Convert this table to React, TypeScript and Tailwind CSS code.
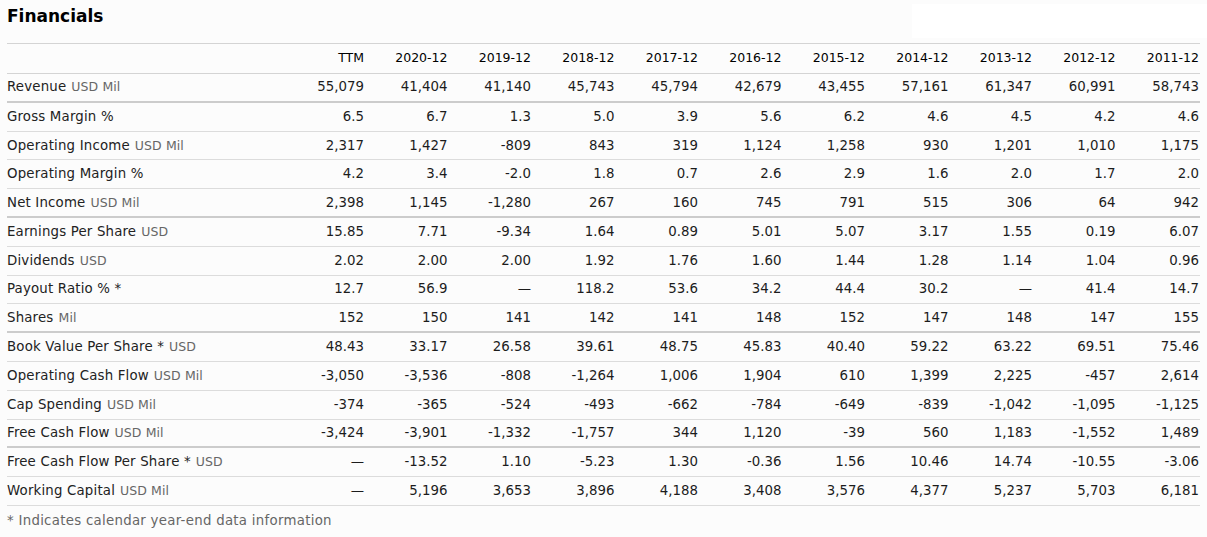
type Row = {
    label: string;
    unit?: string;
    star?: boolean;
    values: string[];
    thick?: boolean;
};

const years = ["TTM", "2020-12", "2019-12", "2018-12", "2017-12", "2016-12", "2015-12", "2014-12", "2013-12", "2012-12", "2011-12"];

const rows: Row[] = [
    { label: "Revenue", unit: "USD Mil", thick: true, values: ["55,079", "41,404", "41,140", "45,743", "45,794", "42,679", "43,455", "57,161", "61,347", "60,991", "58,743"] },
    { label: "Gross Margin %", values: ["6.5", "6.7", "1.3", "5.0", "3.9", "5.6", "6.2", "4.6", "4.5", "4.2", "4.6"] },
    { label: "Operating Income", unit: "USD Mil", values: ["2,317", "1,427", "-809", "843", "319", "1,124", "1,258", "930", "1,201", "1,010", "1,175"] },
    { label: "Operating Margin %", values: ["4.2", "3.4", "-2.0", "1.8", "0.7", "2.6", "2.9", "1.6", "2.0", "1.7", "2.0"] },
    { label: "Net Income", unit: "USD Mil", thick: true, values: ["2,398", "1,145", "-1,280", "267", "160", "745", "791", "515", "306", "64", "942"] },
    { label: "Earnings Per Share", unit: "USD", values: ["15.85", "7.71", "-9.34", "1.64", "0.89", "5.01", "5.07", "3.17", "1.55", "0.19", "6.07"] },
    { label: "Dividends", unit: "USD", values: ["2.02", "2.00", "2.00", "1.92", "1.76", "1.60", "1.44", "1.28", "1.14", "1.04", "0.96"] },
    { label: "Payout Ratio %", star: true, values: ["12.7", "56.9", "—", "118.2", "53.6", "34.2", "44.4", "30.2", "—", "41.4", "14.7"] },
    { label: "Shares", unit: "Mil", thick: true, values: ["152", "150", "141", "142", "141", "148", "152", "147", "148", "147", "155"] },
    { label: "Book Value Per Share", star: true, unit: "USD", values: ["48.43", "33.17", "26.58", "39.61", "48.75", "45.83", "40.40", "59.22", "63.22", "69.51", "75.46"] },
    { label: "Operating Cash Flow", unit: "USD Mil", values: ["-3,050", "-3,536", "-808", "-1,264", "1,006", "1,904", "610", "1,399", "2,225", "-457", "2,614"] },
    { label: "Cap Spending", unit: "USD Mil", values: ["-374", "-365", "-524", "-493", "-662", "-784", "-649", "-839", "-1,042", "-1,095", "-1,125"] },
    { label: "Free Cash Flow", unit: "USD Mil", thick: true, values: ["-3,424", "-3,901", "-1,332", "-1,757", "344", "1,120", "-39", "560", "1,183", "-1,552", "1,489"] },
    { label: "Free Cash Flow Per Share", star: true, unit: "USD", values: ["—", "-13.52", "1.10", "-5.23", "1.30", "-0.36", "1.56", "10.46", "14.74", "-10.55", "-3.06"] },
    { label: "Working Capital", unit: "USD Mil", values: ["—", "5,196", "3,653", "3,896", "4,188", "3,408", "3,576", "4,377", "5,237", "5,703", "6,181"] },
];

const App = () => {
    return (
        <div
            className="min-h-[537px] bg-[#fcfcfc] pl-[7px] pr-[7px] text-[#222]"
            style={{ fontFamily: '"DejaVu Sans", Verdana, sans-serif' }}
        >
            <div className="flex justify-between h-[43px]">
                <h2 className="mt-[5px] text-[17px] leading-[22px] font-bold text-black">Financials</h2>
                <div className="mt-[4px] mr-[-7px] h-[34px] w-[295px] bg-white" />
            </div>

            {/* table */}
            <div className="text-[13.33px]">
                <div className="grid grid-cols-[1fr_repeat(11,83.5px)] h-[31px] items-center border-y border-[#d4d4d4]">
                    <div />
                    {years.map((y) => (
                        <div key={y} className="text-right pr-px text-[12.5px] text-black">
                            {y}
                        </div>
                    ))}
                </div>
                {rows.map((row) => (
                    <div
                        key={row.label}
                        className={
                            row.thick
                                ? "grid grid-cols-[1fr_repeat(11,83.5px)] h-[28.8px] items-center border-b-2 border-[#cccccc]"
                                : "grid grid-cols-[1fr_repeat(11,83.5px)] h-[28.8px] items-center border-b border-[#dcdcdc]"
                        }
                    >
                        <div className="whitespace-nowrap tracking-[0.18px]">
                            {row.label}
                            {row.star && " *"}
                            {row.unit && (
                                <span className="ml-[5px] text-[12.5px] tracking-[0.1px] text-[#666]">{row.unit}</span>
                            )}
                        </div>
                        {row.values.map((v, i) => (
                            <div key={i} className="text-right pr-px text-[#1c1c1c]">
                                {v}
                            </div>
                        ))}
                    </div>
                ))}
            </div>

            <p className="pt-[5px] text-[13.33px] tracking-[0.28px] text-[#666]">
                * Indicates calendar year-end data information
            </p>
        </div>
    );
};

export default App;
